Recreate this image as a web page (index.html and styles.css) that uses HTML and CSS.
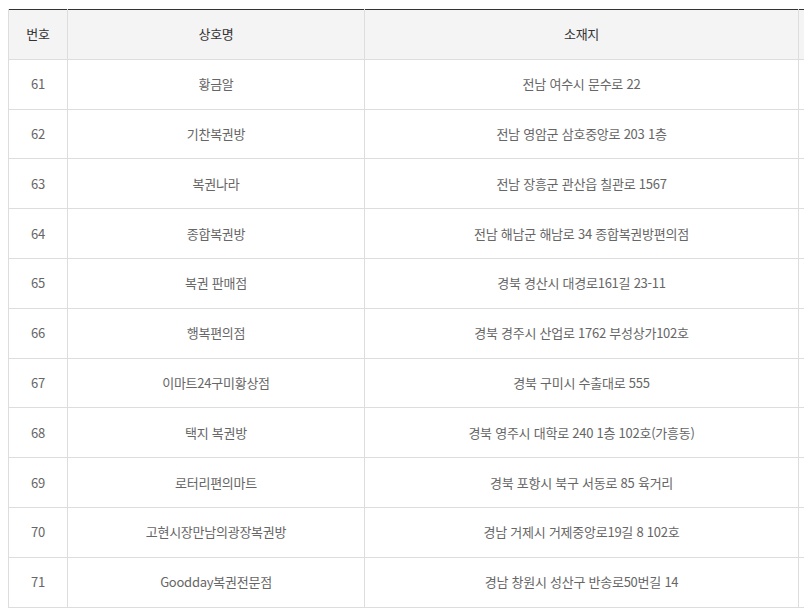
FILE: index.html
```html
<!DOCTYPE html>
<html lang="ko">
<head>
<meta charset="utf-8">
<link rel="stylesheet" href="styles.css">
</head>
<body>
<div class="wrap">
<table class="list">
<colgroup>
<col class="c-no">
<col class="c-name">
<col class="c-addr">
<col class="c-etc">
</colgroup>
<thead>
<tr><th>번호</th><th>상호명</th><th>소재지</th><th></th></tr>
</thead>
<tbody>
<tr><td>61</td><td>황금알</td><td>전남 여수시 문수로 22</td><td></td></tr>
<tr><td>62</td><td>기찬복권방</td><td>전남 영암군 삼호중앙로 203 1층</td><td></td></tr>
<tr><td>63</td><td>복권나라</td><td>전남 장흥군 관산읍 칠관로 1567</td><td></td></tr>
<tr><td>64</td><td>종합복권방</td><td>전남 해남군 해남로 34 종합복권방편의점</td><td></td></tr>
<tr><td>65</td><td>복권 판매점</td><td>경북 경산시 대경로161길 23-11</td><td></td></tr>
<tr><td>66</td><td>행복편의점</td><td>경북 경주시 산업로 1762 부성상가102호</td><td></td></tr>
<tr><td>67</td><td>이마트24구미황상점</td><td>경북 구미시 수출대로 555</td><td></td></tr>
<tr><td>68</td><td>택지 복권방</td><td>경북 영주시 대학로 240 1층 102호(가흥동)</td><td></td></tr>
<tr><td>69</td><td>로터리편의마트</td><td>경북 포항시 북구 서동로 85 육거리</td><td></td></tr>
<tr><td>70</td><td>고현시장만남의광장복권방</td><td>경남 거제시 거제중앙로19길 8 102호</td><td></td></tr>
<tr><td>71</td><td>Goodday복권전문점</td><td>경남 창원시 성산구 반송로50번길 14</td><td></td></tr>
</tbody>
</table>
</div>
</body>
</html>
```
FILE: styles.css
```css
html, body {
  margin: 0;
  padding: 0;
  background: #fff;
  overflow: hidden;
}
.wrap {
  padding: 9px 0 0 8px;
  width: 1000px;
}
.list {
  border-collapse: collapse;
  table-layout: fixed;
  width: 950px;
  border-top: 1px solid #333;
  font-family: "Noto Sans CJK KR", "Noto Sans", sans-serif;
  font-size: 13px;
  letter-spacing: -0.25px;
}
.c-no { width: 59px; }
.c-name { width: 297px; }
.c-addr { width: 434px; }
.c-etc { width: 160px; }
.list th,
.list td {
  border: 1px solid #dddddd;
  border-top: none;
  height: 48.8px;
  padding: 0;
  text-align: center;
  vertical-align: middle;
  line-height: 20px;
}
.list th {
  background: #f4f4f4;
  color: #333;
  font-weight: normal;
}
.list td {
  color: #666;
}
```
